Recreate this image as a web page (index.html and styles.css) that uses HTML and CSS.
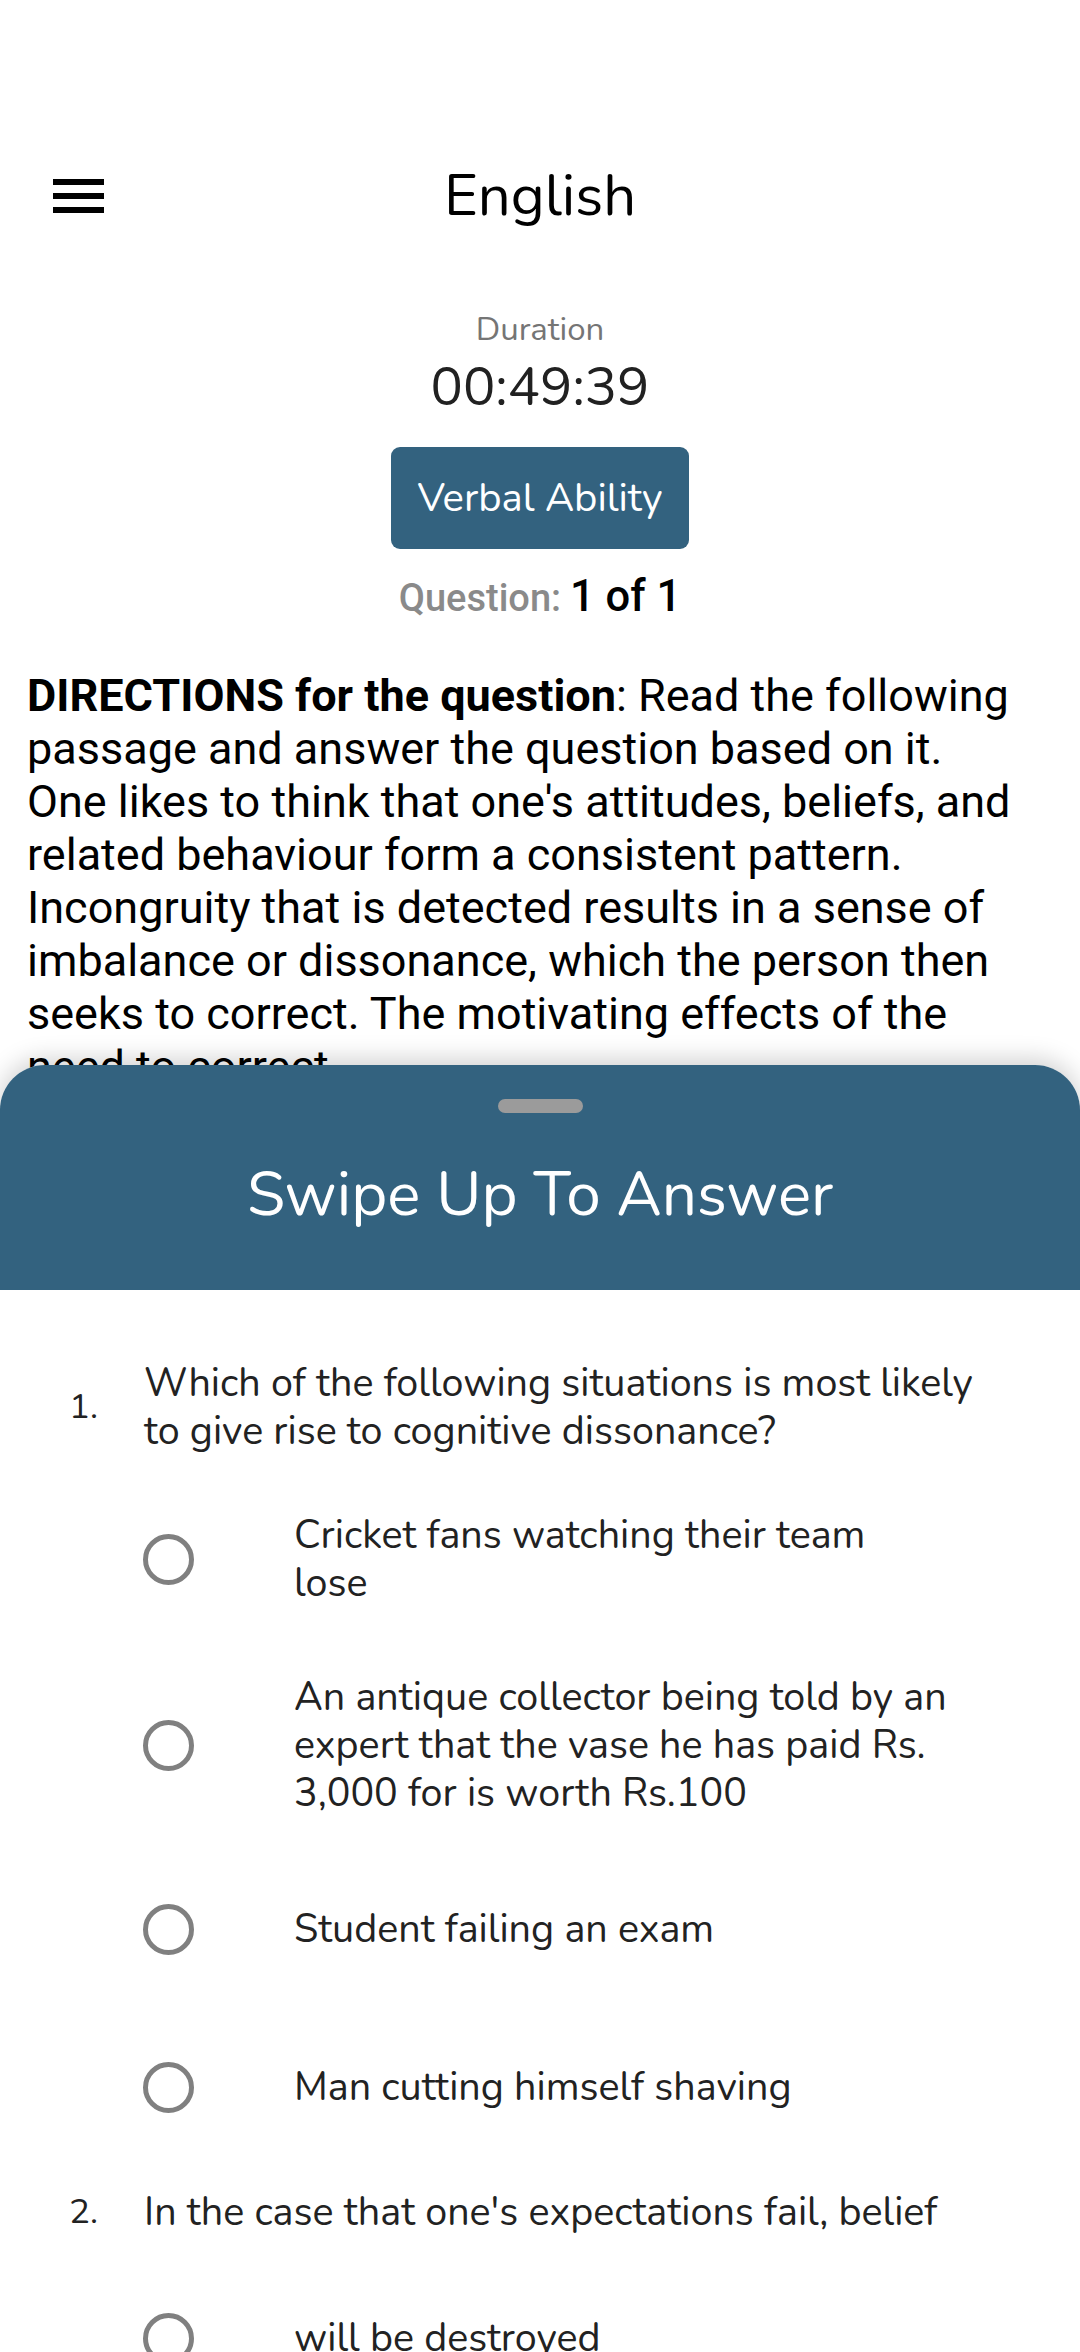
FILE: index.html
```html
<!DOCTYPE html>
<html lang="en">
<head>
<meta charset="utf-8">
<title>English</title>
<link rel="stylesheet" href="styles.css">
</head>
<body>
<div class="screen">
  <header class="topbar">
    <div class="menu" aria-label="menu">
      <span></span><span></span><span></span>
    </div>
    <h1 class="title">English</h1>
    <div class="spacer"></div>
  </header>

  <section class="timer">
    <div class="timer-label">Duration</div>
    <div class="timer-value">00:49:39</div>
  </section>

  <div class="section-wrap">
    <button class="section-btn">Verbal Ability</button>
  </div>

  <div class="qcount"><span class="qcount-label">Question:</span> <span class="qcount-value">1 of 1</span></div>

  <p class="passage"><b>DIRECTIONS for the question</b>: Read the following passage and answer the question based on it. One likes to think that one's attitudes, beliefs, and related behaviour form a consistent pattern. Incongruity that is detected results in a sense of imbalance or dissonance, which the person then seeks to correct. The motivating effects of the need to correct</p>

  <div class="sheet">
    <div class="sheet-head">
      <div class="handle"></div>
      <div class="sheet-title">Swipe Up To Answer</div>
    </div>
    <div class="qlist">
      <div class="q">
        <div class="q-num">1.</div>
        <div class="q-text">Which of the following situations is most likely to give rise to cognitive dissonance?</div>
      </div>
      <div class="opt"><span class="radio"></span><span class="opt-text">Cricket fans watching their team lose</span></div>
      <div class="opt"><span class="radio"></span><span class="opt-text">An antique collector being told by an expert that the vase he has paid Rs. 3,000 for is worth Rs.100</span></div>
      <div class="opt"><span class="radio"></span><span class="opt-text">Student failing an exam</span></div>
      <div class="opt"><span class="radio"></span><span class="opt-text">Man cutting himself shaving</span></div>
      <div class="q">
        <div class="q-num">2.</div>
        <div class="q-text">In the case that one's expectations fail, belief</div>
      </div>
      <div class="opt"><span class="radio"></span><span class="opt-text">will be destroyed</span></div>
    </div>
  </div>
</div>
</body>
</html>
```

FILE: styles.css
```css
html, body {
  margin: 0;
  padding: 0;
  background: #ffffff;
}

.screen {
  position: relative;
  width: 1080px;
  height: 2352px;
  overflow: hidden;
  background: #ffffff;
  font-family: "Nunito", "Lato", "Noto Sans", sans-serif;
  color: #000;
}

.topbar {
  margin-top: 136px;
  height: 120px;
  display: grid;
  grid-template-columns: 1fr auto 1fr;
  align-items: center;
}

.menu {
  padding-left: 53px;
  display: flex;
  flex-direction: column;
  gap: 8px;
}

.menu span {
  display: block;
  width: 51px;
  height: 6px;
  background: #000;
}

.title {
  margin: 0;
  font-weight: 400;
  font-size: 58px;
  line-height: 70px;
  color: #000;
}

.timer {
  margin-top: 53px;
  display: flex;
  flex-direction: column;
  align-items: center;
}

.timer-label {
  font-size: 33px;
  line-height: 42px;
  color: #757575;
}

.timer-value {
  margin-top: 6px;
  font-size: 54px;
  line-height: 60px;
  color: #212121;
}

.section-wrap {
  margin-top: 30px;
  display: flex;
  justify-content: center;
}

.section-btn {
  width: 298px;
  height: 102px;
  border: none;
  border-radius: 9px;
  background: #33627f;
  color: #fff;
  font-family: inherit;
  font-size: 40px;
  padding: 0;
}

.qcount {
  margin-top: 24px;
  height: 48px;
  line-height: 48px;
  text-align: center;
  font-family: "Roboto", sans-serif;
}

.qcount-label {
  color: #8a8a8a;
  font-size: 38px;
  font-weight: 500;
}

.qcount-value {
  margin-left: 5px;
  color: #000;
  font-size: 43.5px;
  font-weight: 500;
}

.passage {
  margin: 48px 0 0;
  padding: 0 50px 0 27px;
  font-family: "Roboto", sans-serif;
  font-size: 45px;
  line-height: 53px;
  color: #000;
}

.sheet {
  position: absolute;
  top: 1065px;
  left: 0;
  right: 0;
  bottom: 0;
  background: #fff;
  border-radius: 45px 45px 0 0;
  overflow: hidden;
  box-shadow: 0 -6px 24px rgba(0, 0, 0, 0.18);
}

.sheet-head {
  height: 225px;
  background: #33627f;
  display: flex;
  flex-direction: column;
  align-items: center;
}

.handle {
  margin-top: 34px;
  width: 85px;
  height: 14px;
  border-radius: 7px;
  background: #9b9b9b;
}

.sheet-title {
  margin-top: 44px;
  font-size: 62px;
  line-height: 76px;
  color: #fff;
}

.qlist {
  padding-top: 47px;
  color: #222;
}

.q {
  display: flex;
  align-items: center;
  padding: 22px 80px 23px 69px;
}

.q-num {
  width: 75px;
  flex: none;
  font-size: 35px;
  line-height: 48px;
}

.q-text {
  font-size: 39.5px;
  line-height: 48px;
}

.opt {
  box-sizing: border-box;
  min-height: 158px;
  padding: 33px 131px 33px 143px;
  display: flex;
  align-items: center;
}

.radio {
  flex: none;
  box-sizing: border-box;
  width: 51px;
  height: 51px;
  border: 5px solid #808080;
  border-radius: 50%;
}

.opt-text {
  margin-left: 100px;
  font-size: 39.5px;
  line-height: 48px;
}
```
